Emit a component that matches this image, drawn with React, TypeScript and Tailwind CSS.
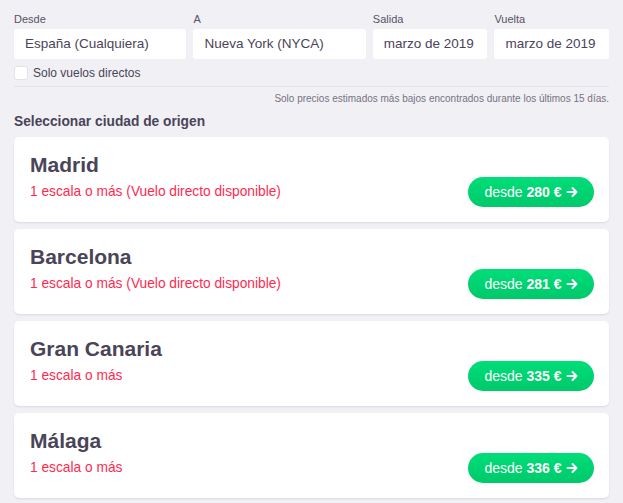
import React from 'react';

const cities = [
  { name: 'Madrid', stops: '1 escala o más (Vuelo directo disponible)', price: '280 €' },
  { name: 'Barcelona', stops: '1 escala o más (Vuelo directo disponible)', price: '281 €' },
  { name: 'Gran Canaria', stops: '1 escala o más', price: '335 €' },
  { name: 'Málaga', stops: '1 escala o más', price: '336 €' },
];

const fields = [
  { label: 'Desde', value: 'España (Cualquiera)', w: 'w-[173px]' },
  { label: 'A', value: 'Nueva York (NYCA)', w: 'w-[173px]' },
  { label: 'Salida', value: 'marzo de 2019', w: 'w-[115px]' },
  { label: 'Vuelta', value: 'marzo de 2019', w: 'w-[115px]' },
];

const App = () => {
  return (
    <div className="min-h-[503px] bg-[#f1f0f5] px-[14px] pt-[12px] pb-[5px] font-['Liberation_Sans',Arial,sans-serif] text-[#4a4458]">
      <div className="flex gap-[7px]">
        {fields.map((f) => (
          <div key={f.label} className={f.w}>
            <div className="text-[11px] leading-[15px] text-[#575266]">{f.label}</div>
            <div className="mt-[2px] h-[30px] overflow-hidden whitespace-nowrap rounded-[3px] bg-white px-[11px] text-[13.5px] leading-[30px] text-[#4a4458]">
              {f.value}
            </div>
          </div>
        ))}
      </div>

      <label className="mt-[7px] flex h-[14px] items-center gap-[5px]">
        <span className="h-[14px] w-[14px] rounded-[3px] border border-[#e2e1e8] bg-white" />
        <span className="text-[12px] leading-[14px] text-[#4a4458]">Solo vuelos directos</span>
      </label>

      <div className="mt-[6px] border-t border-[#e3e2e9]" />

      <p className="mt-[5px] text-right text-[10px] leading-[14px] text-[#77727f]">
        Solo precios estimados más bajos encontrados durante los últimos 15 días.
      </p>

      <h2 className="mt-[8px] text-[13.75px] font-bold leading-[16px] text-[#4a4458]">
        Seleccionar ciudad de origen
      </h2>

      <div className="mt-[7px] flex flex-col gap-[7px]">
        {cities.map((c) => (
          <div
            key={c.name}
            className="flex h-[85px] items-end justify-between rounded-[5px] bg-white pb-[15px] pl-4 pr-[15px] pt-[14px] shadow-[0_1px_2px_rgba(60,50,90,0.12)]"
          >
            <div className="self-start">
              <div className="text-[21px] font-bold leading-[28px] text-[#4a4458]">{c.name}</div>
              <div className="mt-[3px] text-[13.75px] leading-[20px] text-[#ff2a4f]">{c.stops}</div>
            </div>
            <button className="flex h-[30px] w-[126px] items-center justify-center gap-[4px] rounded-full bg-gradient-to-b from-[#00de79] to-[#00c96a] text-[14px] text-white">
              <span>desde</span>
              <span className="font-bold">{c.price}</span>
              <svg width="12" height="12" viewBox="0 0 12 12" fill="none" stroke="white" strokeWidth="2" strokeLinecap="round" strokeLinejoin="round">
                <path d="M1.5 6h9M6.5 2l4 4-4 4" />
              </svg>
            </button>
          </div>
        ))}
      </div>
    </div>
  );
};

export default App;
